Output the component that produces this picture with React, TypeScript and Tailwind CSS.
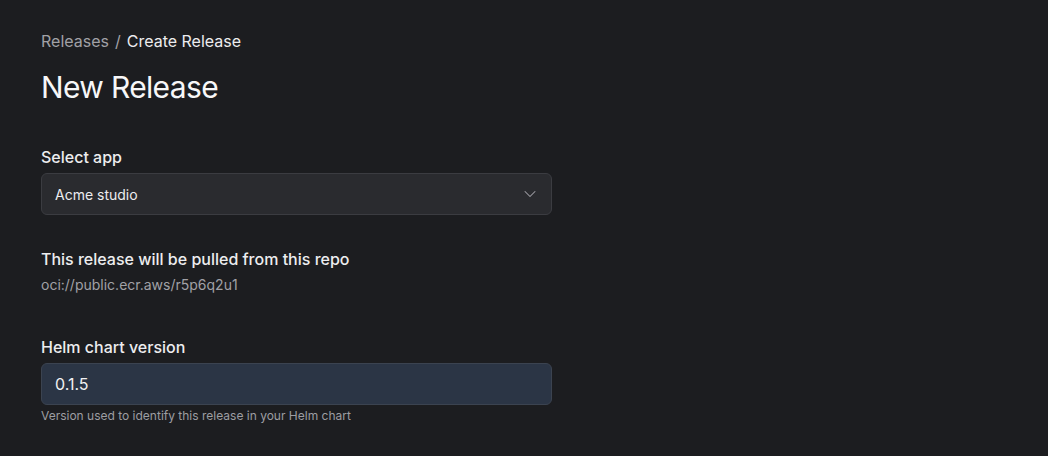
import { ChevronDown } from 'lucide-react';

export default function App() {
  return (
    <div
      className="min-h-screen w-full bg-[#1c1d20] text-[#f4f4f5]"
      style={{ fontFamily: 'Inter, "Noto Sans", sans-serif' }}
    >
      <div className="px-[41px] pt-[29px] pb-10">
        {/* Breadcrumb */}
        <div className="flex items-center gap-[6px] text-[16px] leading-6">
          <span className="text-[#a1a1a6]">Releases</span>
          <span className="text-[#a1a1a6]">/</span>
          <span className="text-[#ececee]">Create Release</span>
        </div>

        <h1 className="mt-4 text-[30px] leading-9 font-normal tracking-[-0.65px] text-[#f7f7f8]">New Release</h1>

        {/* Select app */}
        <div className="mt-10 w-[511px]">
          <label className="block text-[16px] leading-6 font-medium text-[#ededef]">Select app</label>
          <button className="mt-1 flex h-[42px] w-full items-center justify-between rounded-[6px] border border-[#3b3c41] bg-[#2a2b2f] pl-[13px] pr-[11px] text-left text-[14px] text-[#ededef]">
            <span>Acme studio</span>
            <ChevronDown size={20} strokeWidth={1.25} className="text-[#a1a1a6]" />
          </button>
        </div>

        {/* Repo */}
        <div className="mt-8">
          <div className="text-[16px] leading-6 font-medium text-[#ededef]">This release will be pulled from this repo</div>
          <div className="mt-1 text-[14px] leading-5 text-[#a1a1a6]">oci://public.ecr.aws/r5p6q2u1</div>
        </div>

        {/* Helm chart version */}
        <div className="mt-10 w-[511px]">
          <label className="block text-[16px] leading-6 font-medium text-[#ededef]">Helm chart version</label>
          <div className="mt-1 flex h-[42px] w-full items-center rounded-[6px] border border-[#3b4350] bg-[#2b3545] pl-[13px] text-[16px] text-[#f1f1f3]">
            0.1.5
          </div>
          <p className="mt-[3px] text-[12px] leading-4 text-[#9d9da2]">Version used to identify this release in your Helm chart</p>
        </div>
      </div>
    </div>
  );
}
